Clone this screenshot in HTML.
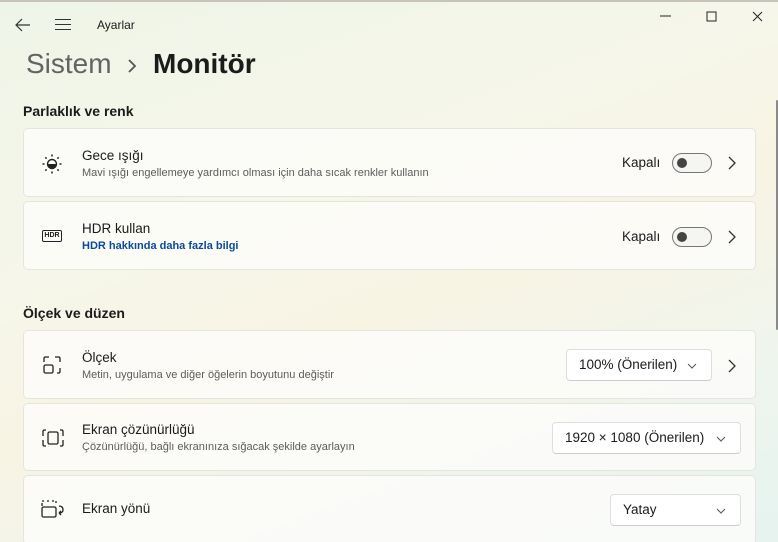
<!DOCTYPE html>
<html><head><meta charset="utf-8"><style>
*{box-sizing:border-box;margin:0;padding:0}
html{width:778px;height:542px;overflow:hidden}
body{width:778px;height:542px;overflow:hidden;font-family:"Segoe UI","Liberation Sans",sans-serif;color:#1b1b1b;position:relative;
background:linear-gradient(160deg,#eef5e8 0%,#f6f6ea 35%,#f8f4e4 55%,#eef5ee 80%,#e6f3ef 100%);}
.top{position:absolute;left:0;top:0;width:778px;height:2px;background:#c8c4bc}
.a{position:absolute}
.card{position:absolute;left:23px;width:733px;background:rgba(253,253,250,0.82);border:1px solid #e4e6de;border-radius:5px}
.t{position:absolute;left:58px;font-size:13.5px;color:#1b1b1b}
.s{position:absolute;left:58px;font-size:11px;color:#5c5c5c}
.kap{position:absolute;left:598px;font-size:13.5px}
.tog{position:absolute;left:648px;width:40px;height:20px;border:1px solid #777;border-radius:10px;background:#f5f5f2}
.tog:after{content:"";position:absolute;left:4px;top:4px;width:10px;height:10px;border-radius:50%;background:#444}
.chev{position:absolute;left:703px}
.dd{position:absolute;background:#fff;border:1px solid #dedede;border-bottom-color:#ccc;border-radius:4px;height:32px;font-size:13.5px;padding:7px 0 0 12px}
.dd svg{position:absolute;right:14px;top:13px}
.h{position:absolute;left:23px;font-size:14px;font-weight:600}
</style></head><body>
<div class="top"></div>
<svg class="a" style="left:15px;top:18px" width="16" height="14"><path d="M1 7H15M7 1L1 7L7 13" fill="none" stroke="#333" stroke-width="1.2"/></svg>
<svg class="a" style="left:55px;top:18px" width="16" height="13"><path d="M0 1.5H16M0 6.5H16M0 11.5H16" stroke="#333" stroke-width="1.1"/></svg>
<div class="a" style="left:97px;top:18px;font-size:12px">Ayarlar</div>
<svg class="a" style="left:660px;top:15px" width="12" height="2"><path d="M0 1H11" stroke="#222"/></svg>
<svg class="a" style="left:706px;top:11px" width="12" height="12"><rect x="1" y="1" width="9" height="9" fill="none" stroke="#222"/></svg>
<svg class="a" style="left:752px;top:11px" width="12" height="12"><path d="M1 1L10 10M10 1L1 10" stroke="#222"/></svg>
<div class="a" style="left:26px;top:48px;font-size:28px;color:#636363">Sistem</div>
<svg class="a" style="left:127px;top:59px" width="10" height="14"><path d="M2 1L8 7L2 13" fill="none" stroke="#555" stroke-width="1.8"/></svg>
<div class="a" style="left:153px;top:48px;font-size:28px;font-weight:600">Monitör</div>
<div class="h" style="top:103px">Parlaklık ve renk</div>
<div class="card" style="top:128px;height:69px">
<svg class="a" style="left:17px;top:24px" width="22" height="22"><circle cx="11" cy="11" r="4.5" fill="none" stroke="#222" stroke-width="1.4"/><path d="M7 11A4 4 0 0 0 15 11Z" fill="#222"/><g stroke="#222" stroke-width="1.5"><path d="M11 1.5V3.5M11 18.5V20.5M1.5 11H3.5M18.5 11H20.5M4.3 4.3L5.6 5.6M16.4 16.4L17.7 17.7M4.3 17.7L5.6 16.4M16.4 5.6L17.7 4.3"/></g></svg>
<div class="t" style="top:19px">Gece ışığı</div>
<div class="s" style="top:38px">Mavi ışığı engellemeye yardımcı olması için daha sıcak renkler kullanın</div>
<div class="kap" style="top:26px">Kapalı</div><div class="tog" style="top:24px"></div>
<svg class="chev" style="top:27px" width="10" height="14"><path d="M2 1L8 7L2 13" fill="none" stroke="#333" stroke-width="1.3"/></svg>
</div>
<div class="card" style="top:201px;height:69px">
<div class="a" style="left:18px;top:28px;width:20px;height:12px;border:1.3px solid #222;border-radius:2px;font-size:7px;font-weight:700;line-height:10px;text-align:center">HDR</div>
<div class="t" style="top:19px">HDR kullan</div>
<div class="s" style="top:38px;color:#0b4a9a;font-weight:600">HDR hakkında daha fazla bilgi</div>
<div class="kap" style="top:27px">Kapalı</div><div class="tog" style="top:25px"></div>
<svg class="chev" style="top:28px" width="10" height="14"><path d="M2 1L8 7L2 13" fill="none" stroke="#333" stroke-width="1.3"/></svg>
</div>
<div class="h" style="top:305px">Ölçek ve düzen</div>
<div class="card" style="top:330px;height:69px">
<svg class="a" style="left:19px;top:25px" width="20" height="20"><g fill="none" stroke="#222" stroke-width="1.3"><path d="M1 6V2.5Q1 1 2.5 1H6M12 1H15.5Q17 1 17 2.5V6M17 12V15.5Q17 17 15.5 17H14"/><rect x="1" y="9" width="9" height="8" rx="1.5"/></g></svg>
<div class="t" style="top:19px">Ölçek</div>
<div class="s" style="top:38px">Metin, uygulama ve diğer öğelerin boyutunu değiştir</div>
<div class="dd" style="left:542px;top:18px;width:146px">100% (Önerilen)<svg width="10" height="6"><path d="M1 1L5 5L9 1" fill="none" stroke="#555"/></svg></div>
<svg class="chev" style="top:28px" width="10" height="14"><path d="M2 1L8 7L2 13" fill="none" stroke="#333" stroke-width="1.3"/></svg>
</div>
<div class="card" style="top:403px;height:68px">
<svg class="a" style="left:18px;top:25px" width="22" height="20"><g fill="none" stroke="#222" stroke-width="1.3"><path d="M4 1H2.5Q1 1 1 2.5V7M1 11V15.5Q1 17 2.5 17H4M18 1H19.5Q21 1 21 2.5V7M21 11V15.5Q21 17 19.5 17H18"/><rect x="6" y="3" width="10" height="12" rx="1.5"/></g></svg>
<div class="t" style="top:18px">Ekran çözünürlüğü</div>
<div class="s" style="top:37px">Çözünürlüğü, bağlı ekranınıza sığacak şekilde ayarlayın</div>
<div class="dd" style="left:528px;top:18px;width:189px">1920 × 1080 (Önerilen)<svg width="10" height="6"><path d="M1 1L5 5L9 1" fill="none" stroke="#555"/></svg></div>
</div>
<div class="card" style="top:475px;height:70px">
<svg class="a" style="left:17px;top:24px" width="24" height="20"><g fill="none" stroke="#222" stroke-width="1.3"><path d="M1 6V3M1 1H3M6 1H8M11 1H13M15 1V3"/><rect x="1" y="7" width="14" height="10" rx="1.5"/><path d="M18 6Q22 6 22 10Q22 13 18 13M18 13L20 11M18 13L20 15"/></g></svg>
<div class="t" style="top:25px">Ekran yönü</div>
<div class="dd" style="left:586px;top:18px;width:131px">Yatay<svg width="10" height="6"><path d="M1 1L5 5L9 1" fill="none" stroke="#555"/></svg></div>
</div>
<div class="a" style="left:776px;top:100px;width:2px;height:230px;background:#8a8a8a;border-radius:1px"></div>
</body></html>
